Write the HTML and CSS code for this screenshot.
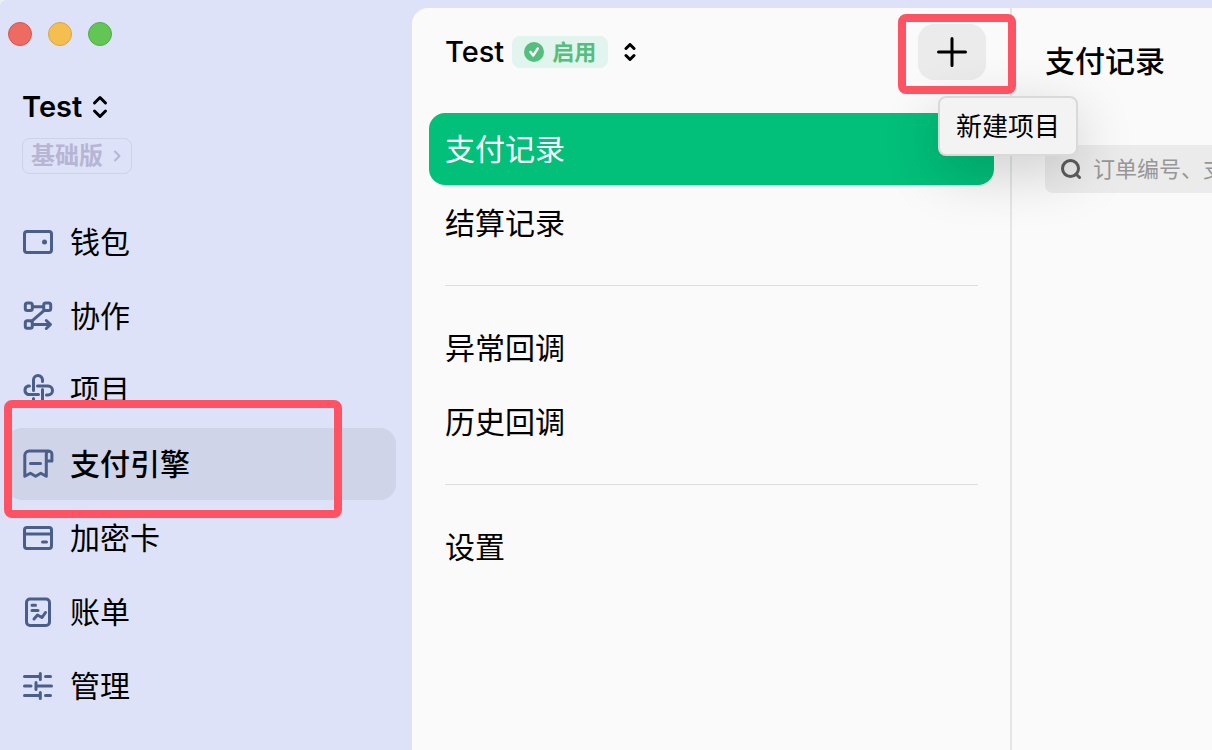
FILE: index.html
```html
<!DOCTYPE html>
<html lang="zh-CN">
<head>
<meta charset="utf-8">
<title>支付引擎</title>
<link rel="stylesheet" href="styles.css">
</head>
<body>
<div class="window">
  <aside class="sidebar">
    <div class="lights">
      <button class="light light-close" aria-label="关闭"></button>
      <button class="light light-min" aria-label="最小化"></button>
      <button class="light light-max" aria-label="缩放"></button>
    </div>
    <div class="account">
      <button class="switcher">Test
        <svg class="chevrons" width="16" height="24" viewBox="0 0 16 24"><path d="M2.500 8 8 2.500 13.500 8M2.500 16 8 21.500 13.500 16"/></svg>
      </button>
      <button class="plan">基础版
        <svg width="8" height="12" viewBox="0 0 8 12"><path d="M2 1.500 6.500 6 2 10.500"/></svg>
      </button>
    </div>
    <nav class="nav">
      <a class="nav-item" href="#wallet">
        <svg class="icon" viewBox="0 0 32 32"><rect x="2.500" y="5.500" width="27" height="21" rx="2.500"/><circle class="dot" cx="22.500" cy="16" r="2.500"/></svg>
        钱包</a>
      <a class="nav-item" href="#collab">
        <svg class="icon" viewBox="0 0 32 32"><rect x="3.300" y="3" width="7" height="7.500" rx="2"/><rect x="21.700" y="3" width="7" height="7.500" rx="2"/><rect x="3.300" y="20.800" width="7" height="7.500" rx="2"/><path d="M10.500 6.800H21.500M22.500 10.200 9.500 21.300M10.500 24.500H28.300M24.300 20.500 28.500 24.500 24.300 28.500"/></svg>
        协作</a>
      <a class="nav-item" href="#projects">
        <svg class="icon" viewBox="0 0 32 32"><path d="M11.500 16.500V6A4.500 4.500 0 0 1 20.500 6V7.500M15.500 12H26A4.500 4.500 0 0 1 26 21H24.500M20.500 15.500V26A4.500 4.500 0 0 1 11.500 26V24.500M16.500 20.500H6A4.500 4.500 0 0 1 6 12H7.500"/></svg>
        项目</a>
      <a class="nav-item nav-item-active" href="#payments" aria-current="page">
        <svg class="icon" viewBox="0 0 32 32"><path d="M24.300 13V28.300L18.800 25.300 13.600 28.300 8.400 25.300 2.800 28.300V7.500A4.500 4.500 0 0 1 7.300 3H27M24.300 13V6A2.800 2.800 0 0 1 29.900 6V13ZM8.500 15.500H18.500"/></svg>
        支付引擎
        <span class="mark mark-nav"></span></a>
      <a class="nav-item" href="#card">
        <svg class="icon" viewBox="0 0 32 32"><rect x="2.500" y="5.500" width="27" height="21" rx="2.500"/><path d="M3 12H29M20.500 20H24.500"/></svg>
        加密卡</a>
      <a class="nav-item" href="#bills">
        <svg class="icon" viewBox="0 0 32 32"><rect x="4.500" y="3" width="23" height="26.500" rx="3.500"/><path d="M10 9.300H13.500M10 14.500H16M12 23 15.500 19 20 21.500 23.500 16.500"/></svg>
        账单</a>
      <a class="nav-item" href="#manage">
        <svg class="icon" viewBox="0 0 32 32"><path d="M2.500 6.500H18M18.300 3.500V9.500M23.500 6.500H28.500M2.500 16H9M14 12.500V19.500M14 16H29.500M2.500 25.500H18M18.300 22.500V28.500M23.500 25.500H28.500"/></svg>
        管理</a>
    </nav>
  </aside>

  <div class="content">
    <section class="menu">
      <header class="menu-head">
        <button class="project">Test
          <span class="status">
            <svg width="20" height="20" viewBox="0 0 20 20"><circle cx="10" cy="10" r="10"/><path d="M6.500 10 9.200 13.500 13.800 6.500"/></svg>
            启用</span>
          <svg class="chevrons" width="12" height="18" viewBox="0 0 12 18"><path d="M2 5.500 6 1.500 10 5.500M2 12.500 6 16.500 10 12.500"/></svg>
        </button>
        <div class="add">
          <button class="add-button" aria-label="新建项目" aria-describedby="add-tip">
            <svg width="30" height="30" viewBox="0 0 30 30"><path d="M15 1.500V28.500M1.500 15H28.500"/></svg>
          </button>
          <span class="tooltip" id="add-tip" role="tooltip">新建项目</span>
          <span class="mark mark-add"></span>
        </div>
      </header>
      <nav class="menu-list">
        <a class="menu-item menu-item-active" href="#records" aria-current="page">支付记录</a>
        <a class="menu-item" href="#settlement">结算记录</a>
        <hr class="divider">
        <a class="menu-item" href="#failed">异常回调</a>
        <a class="menu-item" href="#history">历史回调</a>
        <hr class="divider">
        <a class="menu-item" href="#settings">设置</a>
      </nav>
    </section>
    <main class="main">
      <h1 class="title">支付记录</h1>
      <label class="search">
        <svg width="20" height="20" viewBox="0 0 20 20"><circle cx="9.500" cy="9.500" r="8"/><path d="M15 15 18.500 18.500"/></svg>
        <input class="search-input" type="text" aria-label="搜索" placeholder="订单编号、支付编号">
      </label>
    </main>
  </div>
</div>
</body>
</html>
```
FILE: styles.css
```css
* {
  box-sizing: border-box;
}

body {
  margin: 0;
  background: #f0f0f4;
  color: #000;
  font-family: Inter, "Noto Sans CJK SC", sans-serif;
  font-size: 30px;
  line-height: 40px;
}

button,
input {
  margin: 0;
  padding: 0;
  border: 0;
  background: none;
  color: inherit;
  font: inherit;
}

a {
  color: inherit;
  text-decoration: none;
}

svg {
  flex: none;
  fill: none;
  stroke: currentColor;
  stroke-linecap: round;
  stroke-linejoin: round;
}

.window {
  display: flex;
  min-height: 100vh;
  overflow: hidden;
  border-top-left-radius: 6px;
  background: #dde2f8;
}

/* Sidebar */

.sidebar {
  flex: 0 0 412px;
  padding: 22px 16px 0 6px;
}

.lights {
  display: flex;
  gap: 16px;
  padding-left: 2px;
}

.light {
  width: 24px;
  height: 24px;
  border: 1px solid;
  border-radius: 50%;
}

.light-close {
  border-color: #d9544c;
  background: #ed6b60;
}

.light-min {
  border-color: #d9a544;
  background: #f5bf4f;
}

.light-max {
  border-color: #52ac43;
  background: #62c655;
}

.account {
  display: flex;
  flex-direction: column;
  align-items: flex-start;
  gap: 11px;
  padding: 41px 16px 32px;
}

.switcher {
  display: flex;
  align-items: center;
  gap: 10px;
  font-size: 29px;
  font-weight: 600;
}

.chevrons {
  stroke-width: 3;
}

.plan {
  display: flex;
  align-items: center;
  gap: 10px;
  height: 36px;
  padding: 0 10px 0 8px;
  border: 1px solid #cfd1e8;
  border-radius: 8px;
  color: #b7b5d3;
  font-size: 24px;
  font-weight: 700;
}

.plan svg {
  stroke-width: 2;
}

.nav {
  display: flex;
  flex-direction: column;
  gap: 2px;
}

.nav-item {
  position: relative;
  display: flex;
  align-items: center;
  gap: 16px;
  height: 72px;
  padding: 0 16px;
  border-radius: 16px;
}

.nav-item-active {
  background: #cfd4e8;
  font-weight: 500;
}

.icon {
  width: 32px;
  height: 32px;
  color: #495e8b;
  stroke-width: 3;
}

.dot {
  fill: currentColor;
  stroke: none;
}

/* Highlight frames */

.mark {
  position: absolute;
  z-index: 2;
  border: 8px solid #ff5364;
  border-radius: 8px;
  pointer-events: none;
}

.mark-nav {
  inset: -28px 54px -18px -2px;
}

.mark-add {
  inset: -10px -30px -14px -20px;
}

/* Content */

.content {
  display: flex;
  flex: 1;
  min-width: 0;
  margin-top: 8px;
  border-top-left-radius: 16px;
  background: #fafafa;
}

.menu {
  flex: 0 0 600px;
  padding: 16px 16px 0 17px;
  border-right: 2px solid #e5e5e7;
}

.menu-head {
  display: flex;
  justify-content: space-between;
  padding: 0 8px 33px 16px;
}

.project {
  display: flex;
  align-items: center;
  gap: 8px;
  height: 56px;
  font-size: 29px;
  font-weight: 500;
}

.status {
  display: flex;
  align-items: center;
  gap: 8px;
  height: 32px;
  margin-right: 8px;
  padding: 0 12px;
  border-radius: 8px;
  background: #e1f4ed;
  color: #55bd7d;
  font-size: 22px;
  font-weight: 700;
}

.status circle {
  fill: currentColor;
  stroke: none;
}

.status path {
  stroke: #fff;
  stroke-width: 2.4;
}

.add {
  position: relative;
}

.add-button {
  display: flex;
  align-items: center;
  justify-content: center;
  width: 68px;
  height: 56px;
  border-radius: 16px;
  background: #ebebeb;
}

.add-button svg {
  stroke-width: 3;
}

.tooltip {
  position: absolute;
  top: 72px;
  left: 20px;
  z-index: 1;
  padding: 9px 16px 7px;
  border: 2px solid #d9d9d9;
  border-radius: 8px;
  background: #f3f3f3;
  box-shadow: 0 16px 56px rgba(0, 0, 0, 0.18);
  font-size: 26px;
  white-space: nowrap;
}

.menu-list {
  display: flex;
  flex-direction: column;
  gap: 2px;
}

.menu-item {
  display: flex;
  align-items: center;
  height: 72px;
  padding: 0 16px;
  border-radius: 16px;
}

.menu-item-active {
  background: #02bf7a;
  color: #fff;
}

.divider {
  width: calc(100% - 32px);
  margin: 24px 16px;
  border: 0;
  border-top: 1px solid #dedede;
}

.main {
  flex: 1;
  min-width: 0;
  padding: 33px 0 0 33px;
}

.title {
  margin: 0 0 64px;
  font-size: 30px;
  font-weight: 500;
  white-space: nowrap;
}

.search {
  display: flex;
  align-items: center;
  gap: 12px;
  height: 48px;
  padding-left: 16px;
  border-radius: 8px 0 0 8px;
  background: #ebebeb;
  color: #5c5c5c;
}

.search svg {
  stroke-width: 3;
}

.search-input {
  flex: 1;
  min-width: 0;
  outline: 0;
  font-size: 22px;
}

.search-input::placeholder {
  color: #979797;
  opacity: 1;
}
```
